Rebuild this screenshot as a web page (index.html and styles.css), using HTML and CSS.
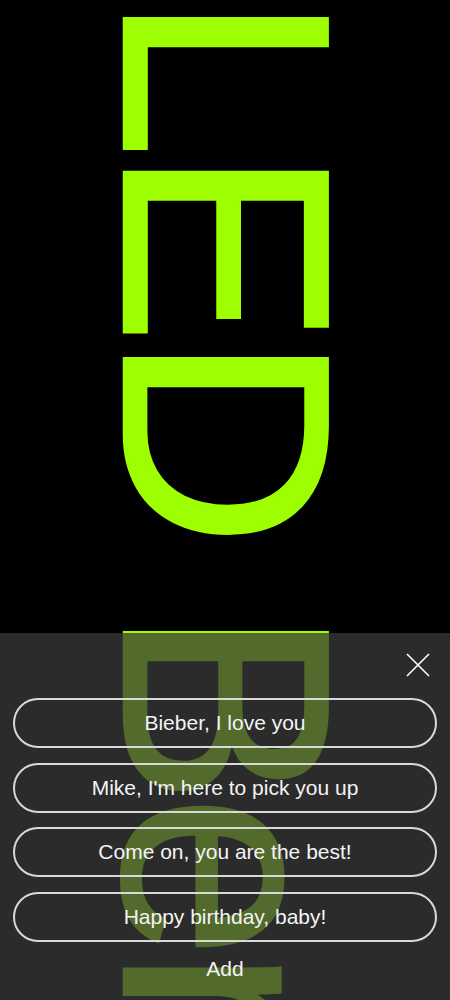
FILE: index.html
```html
<!DOCTYPE html>
<html lang="en">
<head>
<meta charset="utf-8">
<title>LED</title>
<link rel="stylesheet" href="styles.css">
</head>
<body>
<div class="stage">
  <div class="marquee">LED Ben</div>
  <div class="sheet">
    <div class="sheet-head">
      <button class="close" aria-label="Close">
        <svg width="24" height="24" viewBox="0 0 24 24"><path d="M1 1L23 23M23 1L1 23" stroke="#fff" stroke-width="1.6" fill="none"/></svg>
      </button>
    </div>
    <div class="options">
      <button class="option">Bieber, I love you</button>
      <button class="option">Mike, I'm here to pick you up</button>
      <button class="option">Come on, you are the best!</button>
      <button class="option">Happy birthday, baby!</button>
    </div>
    <div class="add">Add</div>
  </div>
</div>
</body>
</html>
```
FILE: styles.css
```css
html, body {
  margin: 0;
  padding: 0;
  background: #000;
}
.stage {
  position: relative;
  width: 450px;
  height: 1000px;
  overflow: hidden;
  background: #000;
  display: flex;
  justify-content: center;
}
.marquee {
  writing-mode: vertical-rl;
  font-family: "Liberation Sans", Arial, sans-serif;
  font-size: 296px;
  line-height: 1;
  letter-spacing: -11px;
  color: #9dff00;
  -webkit-text-stroke: 2.5px #9dff00;
  white-space: nowrap;
  margin-top: -6px;
  margin-left: 2px;
}
.sheet {
  position: absolute;
  left: 0;
  right: 0;
  bottom: 0;
  height: 367px;
  background: rgba(57, 57, 59, 0.75);
  font-family: "Liberation Sans", Arial, sans-serif;
  color: #f2f2f2;
  display: flex;
  flex-direction: column;
}
.sheet-head {
  height: 65px;
  display: flex;
  justify-content: flex-end;
  align-items: flex-start;
}
.close {
  margin: 20px 20px 0 0;
  width: 24px;
  height: 24px;
  padding: 0;
  border: 0;
  background: none;
  display: block;
}
.close svg { display: block; }
.options {
  display: flex;
  flex-direction: column;
  gap: 14.7px;
  padding: 0 13px;
}
.option {
  height: 50px;
  border: 2px solid #d9d9d9;
  border-radius: 25px;
  background: transparent;
  color: #f4f4f4;
  font-family: "Liberation Sans", Arial, sans-serif;
  font-size: 21px;
  padding: 0;
}
.add {
  text-align: center;
  font-size: 21px;
  margin-top: 15px;
  color: #f4f4f4;
}
```
